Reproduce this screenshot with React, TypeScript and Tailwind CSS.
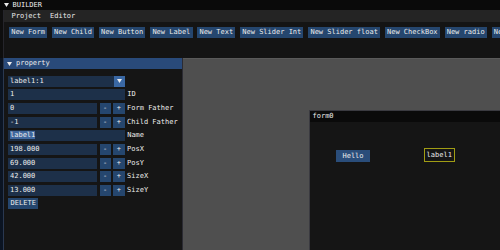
import React from "react";

const Tri = ({ className = "" }: { className?: string }) => (
  <svg width="5" height="4" viewBox="0 0 5 4" className={className}>
    <polygon points="0,0 5,0 2.5,4" fill="#ececec" />
  </svg>
);

const Btn = ({ children }: { children: React.ReactNode }) => (
  <div className="h-[11px] leading-[11px] px-[2.2px] bg-[#25466e] whitespace-nowrap shrink-0">{children}</div>
);

const Field = ({ value, sel }: { value: string; sel?: boolean }) => (
  <div className="h-[11px] leading-[11px] bg-[#1d3049] pl-[2px] whitespace-nowrap overflow-hidden">
    {sel ? <span className="bg-[#3f679e]">{value}</span> : value}
  </div>
);

const Row = ({ value, label, pm, sel }: { value: string; label: string; pm?: boolean; sel?: boolean }) => (
  <div className="flex items-center h-[11px]">
    {pm ? (
      <div className="flex items-center gap-[2.6px]">
        <div className="w-[89px]"><Field value={value} /></div>
        <div className="w-[11px] h-[11px] leading-[11px] text-center bg-[#25466e]">-</div>
        <div className="w-[11.4px] h-[11px] leading-[11px] text-center bg-[#25466e]">+</div>
      </div>
    ) : (
      <div className="w-[116.7px]"><Field value={value} sel={sel} /></div>
    )}
    <div className="ml-[2.5px] leading-[11px] whitespace-nowrap">{label}</div>
  </div>
);

export default function App() {
  const buttons = [
    "New Form", "New Child", "New Button", "New Label", "New Text",
    "New Slider Int", "New Slider float", "New CheckBox", "New radio", "New Combo",
  ];
  return (
    <div className="w-[500px] h-[250px] overflow-hidden flex flex-col bg-[#0f0f0f] text-[#ececec] text-[7px] font-['DejaVu_Sans_Mono',monospace]">
      {/* BUILDER window */}
      <div className="h-[10px] bg-[#0a0a0a] flex items-center pl-[3.5px] gap-[4px]">
        <Tri />
        <span className="leading-[10px]">BUILDER</span>
      </div>
      <div className="h-[48px] flex">
        <div className="w-[4px] bg-[#0e0e0e] border-r border-[#25252b]" />
        <div className="flex-1 flex flex-col bg-[#141414] min-w-0">
          <div className="h-[12px] bg-[#242424] flex items-center gap-[9px] pl-[7.5px]">
            <span>Project</span>
            <span>Editor</span>
          </div>
          <div className="flex gap-[4.75px] pl-[5px] pt-[4.7px] overflow-hidden">
            {buttons.map((b) => (
              <Btn key={b}>{b}</Btn>
            ))}
          </div>
        </div>
      </div>
      {/* lower area */}
      <div className="flex-1 flex min-h-0">
        <div className="w-[4px] bg-[#0b1422] border-r border-[#2a3850]" />
        <div className="w-[179px] flex flex-col bg-[#151515] border-r border-[#2b2b33]">
          <div className="h-[11px] bg-[#294a7a] flex items-center pl-[3px] gap-[4px]">
            <Tri />
            <span className="leading-[11px]">property</span>
          </div>
          <div className="flex flex-col gap-[2.65px] pl-[4px] pt-[6.7px]">
            <div className="flex h-[11px] w-[116.7px] bg-[#1d3049]">
              <div className="flex-1 pl-[2px] leading-[11px]">label1:1</div>
              <div className="w-[10.5px] h-[11px] bg-[#3a68a4] flex items-center justify-center">
                <Tri />
              </div>
            </div>
            <Row value="1" label="ID" />
            <Row value="0" label="Form Father" pm />
            <Row value="-1" label="Child Father" pm />
            <Row value="label1" label="Name" sel />
            <Row value="198.000" label="PosX" pm />
            <Row value="69.000" label="PosY" pm />
            <Row value="42.000" label="SizeX" pm />
            <Row value="13.000" label="SizeY" pm />
            <div className="flex">
              <div className="h-[11px] leading-[11px] px-[2.6px] bg-[#25466e]">DELETE</div>
            </div>
          </div>
        </div>
        <div className="flex-1 relative bg-[#4f4f4f] border-t border-[#5a5a5a]">
          <div className="absolute left-[126px] top-[51px] w-[200px] h-[150px] flex flex-col border border-[#3a3a40] bg-[#151515]">
            <div className="h-[10.5px] bg-[#0a0a0a] pl-[2.5px] leading-[10.5px]">form0</div>
            <div className="relative flex-1">
              <div className="absolute left-[26px] top-[28px] w-[34px] h-[12px] leading-[12px] text-center bg-[#2a4d7a]">Hello</div>
              <div className="absolute left-[113.5px] top-[26.5px] w-[31.5px] h-[14px] leading-[12px] text-center border border-[#a09c14]">label1</div>
            </div>
          </div>
        </div>
      </div>
    </div>
  );
}
